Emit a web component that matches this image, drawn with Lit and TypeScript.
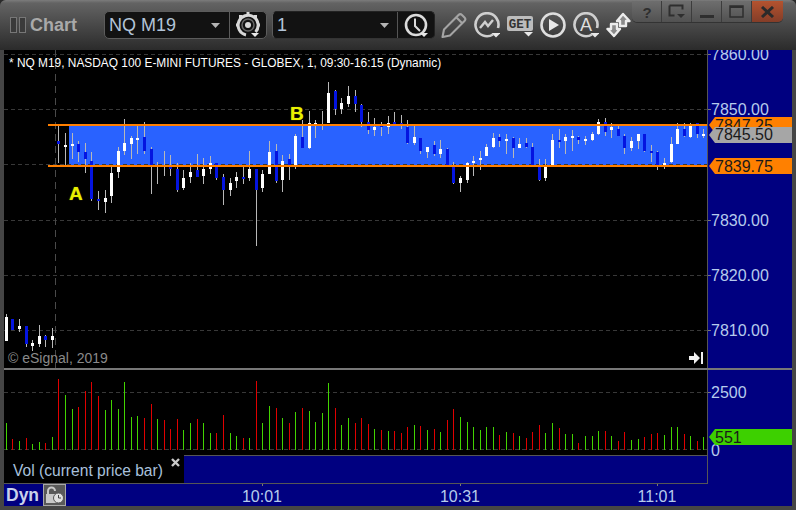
import { LitElement, html, svg, css } from "lit";
import { customElement } from "lit/decorators.js";

type Bar = [number, number, number, number, number, string, number, string];

const BARS: Bar[] = [
  [6,314,341,317,341,"w",423,"g"],[12,319,330,319,330,"b",439,"r"],[19,319,332,326,329,"w",441,"g"],[26,326,347,326,344,"b",438,"r"],
  [32,340,351,343,346,"w",444,"g"],[39,325,347,336,344,"w",442,"g"],[45,335,347,336,340,"b",443,"r"],[52,328,348,336,340,"w",437,"g"],
  [58,125,163,141,144,"b",379,"r"],[65,133,166,145,147,"w",395,"g"],[72,133,159,144,146,"w",409,"g"],[78,141,162,144,152,"b",407,"r"],
  [85,143,173,152,159,"b",391,"r"],[91,152,201,161,199,"b",382,"r"],[98,191,210,199,201,"b",396,"r"],[105,190,213,198,202,"w",410,"g"],
  [111,166,203,173,196,"w",400,"g"],[118,147,178,151,172,"w",409,"g"],[124,119,155,143,151,"w",382,"g"],[131,136,159,138,144,"w",417,"g"],
  [137,125,154,138,140,"w",416,"g"],[144,122,154,137,151,"b",418,"r"],[151,147,194,149,167,"b",404,"r"],[157,162,184,165,167,"w",419,"g"],
  [164,151,176,165,167,"b",420,"r"],[170,155,176,166,169,"b",429,"r"],[177,163,192,169,190,"b",419,"r"],[183,170,190,178,188,"w",430,"g"],
  [190,163,183,172,177,"w",423,"g"],[197,154,177,170,177,"b",419,"r"],[203,158,184,169,176,"w",423,"g"],[210,156,174,163,169,"w",433,"g"],
  [216,163,180,163,178,"b",433,"r"],[223,174,205,177,190,"b",415,"r"],[230,178,196,183,190,"w",433,"g"],[236,172,188,177,181,"w",436,"g"],
  [243,167,184,177,179,"b",438,"r"],[249,151,181,169,178,"w",438,"g"],[256,169,246,169,190,"b",381,"r"],[262,170,192,174,188,"w",423,"g"],
  [269,141,174,152,174,"w",406,"g"],[276,144,183,151,181,"b",408,"r"],[282,155,192,161,180,"w",418,"g"],[289,154,180,159,166,"b",423,"r"],
  [295,134,169,136,167,"w",412,"g"],[302,120,148,137,148,"b",408,"r"],[309,111,149,123,148,"w",411,"g"],[315,120,138,123,125,"w",422,"g"],
  [322,111,130,124,126,"w",413,"g"],[328,82,123,93,123,"w",383,"g"],[335,90,115,91,109,"b",408,"r"],[341,98,114,103,109,"w",425,"g"],
  [348,86,107,96,104,"w",418,"g"],[355,90,112,96,104,"b",423,"r"],[361,104,127,105,122,"b",418,"r"],[368,112,134,122,130,"b",424,"r"],
  [374,118,136,127,130,"w",429,"g"],[381,122,136,125,127,"b",430,"r"],[388,116,134,123,127,"w",431,"g"],[394,112,125,122,124,"b",431,"r"],
  [401,115,129,123,126,"b",433,"r"],[407,120,144,127,143,"b",427,"r"],[414,126,145,137,143,"w",425,"g"],[420,138,154,138,151,"b",426,"r"],
  [427,147,158,147,152,"w",430,"g"],[434,141,156,145,154,"b",429,"r"],[440,140,158,149,154,"w",432,"g"],[447,148,166,149,166,"b",420,"r"],
  [453,162,184,166,183,"b",409,"r"],[460,176,192,178,183,"w",417,"g"],[467,162,183,163,180,"w",422,"g"],[473,156,176,161,163,"w",427,"g"],
  [480,151,170,158,160,"w",430,"g"],[486,144,156,147,156,"w",427,"g"],[493,133,148,138,147,"w",427,"g"],[499,134,147,137,141,"b",435,"r"],
  [506,134,154,139,141,"w",432,"g"],[513,137,158,138,148,"b",433,"r"],[519,138,148,144,148,"w",436,"g"],[526,138,148,143,147,"b",438,"r"],
  [532,143,166,147,166,"b",432,"r"],[539,159,181,165,180,"b",425,"r"],[545,159,181,166,178,"w",433,"g"],[552,134,166,140,166,"w",423,"g"],
  [559,129,148,140,142,"b",428,"r"],[565,134,154,137,141,"w",434,"g"],[572,130,151,136,138,"w",434,"g"],[578,136,144,137,140,"b",443,"r"],
  [585,136,145,139,141,"w",436,"g"],[592,132,141,134,140,"w",436,"g"],[598,119,135,122,134,"w",431,"g"],[605,118,136,122,132,"b",431,"r"],
  [611,123,138,127,130,"w",436,"g"],[618,126,136,129,136,"b",441,"r"],[624,134,154,136,148,"b",432,"r"],[631,137,151,141,148,"w",440,"g"],
  [638,134,149,134,141,"w",439,"g"],[644,134,152,134,151,"b",437,"r"],[651,145,162,151,153,"b",434,"r"],[657,151,170,152,166,"b",433,"r"],
  [664,158,169,163,165,"w",435,"g"],[671,137,163,144,162,"w",427,"g"],[677,123,144,129,144,"w",427,"g"],[684,123,137,129,136,"b",434,"r"],
  [690,123,138,125,137,"w",436,"g"],[697,123,138,123,134,"b",441,"r"],[703,129,138,134,136,"w",437,"g"],
];

const PRICE_LABELS: [string, number][] = [
  ["7860.00", 54], ["7850.00", 109], ["7830.00", 220], ["7820.00", 275], ["7810.00", 330],
];
const PRICE_GRID = [54, 109, 164, 220, 275, 330];
const TIME_LABELS: [string, number][] = [["10:01", 262], ["10:31", 460], ["11:01", 657]];

const caret = (x: number, y: number) => svg`<path d="M${x - 4.5} ${y}h9l-4.500 4.500z" fill="#e8e8e8"/>`;

@customElement("app-root")
export class AppRoot extends LitElement {
  static styles = css`
    :host { display: block; width: 796px; height: 510px; font-family: "Liberation Sans", Arial, sans-serif; background: #2a2a2a; overflow: hidden; }
    .window { width: 796px; height: 510px; border-radius: 6px 6px 0 0; overflow: hidden; position: relative; background: #454545; display: flex; flex-direction: column; }
    .toolbar { height: 50px; flex: none; display: flex; align-items: flex-start; box-sizing: border-box; padding: 11px 0 0 10px;
      background: linear-gradient(#7c7c7c 0, #636363 3px, #4c4c4c 22px, #2b2b2b 50px); }
    .title { display: flex; align-items: center; height: 28px; width: 94px; flex: none; gap: 4px; color: #a9a9a9; font-size: 18px; font-weight: 700; }
    .title svg { display: block; flex: none; }
    .combo { width: 163px; height: 28px; box-sizing: border-box; flex: none; display: flex; align-items: stretch; background: #121212; border: 1px solid #5c5c5c; border-radius: 5px; margin-right: 5px; }
    .combo.second { margin-right: 0; border-right-color: #222; border-top-color:#222; border-bottom-color: #333; }
    .combo .value { flex: 1; display: flex; align-items: center; padding-left: 4px; color: #b3c4d8; font-size: 18px; }
    .combo .drop { width: 13px; margin-right: 7px; align-self: center; }
    .combo.second .drop { margin-right: 6px; }
    .combo .btn { width: 36px; border-left: 1px solid #5c5c5c; display: flex; align-items: center; justify-content: center; }
    .combo.second .btn { border-left-color: #555; }
    .tools { display: flex; margin-left: 6px; gap: 7px; margin-top: 1px; }
    .tools svg { display: block; flex: none; }
    .winctl { position: absolute; top: 1px; left: 632px; width: 151px; height: 21px; display: flex; border-radius: 0 0 5px 5px; overflow: hidden; box-shadow: 0 1px 0 #333; }
    .winctl div { width: 30px; height: 21px; flex: none; display: flex; align-items: center; justify-content: center; box-sizing: border-box; border-right: 1px solid #3c3c3c; background: linear-gradient(#6e6e6e, #515151); }
    .winctl div:last-child { width: 31px; border-right: none; background: linear-gradient(#b4532f, #843d28); }
    .chart { flex: none; margin: 0 4px; width: 788px; height: 456px; display: grid; grid-template-columns: 703px 1px 84px; grid-template-rows: 318px 2px 85px 28px 1px 22px; background: #000080; }
    .price, .volume { position: relative; background: #000; overflow: hidden; }
    .price { grid-column: 1; grid-row: 1; }
    .volume { grid-column: 1; grid-row: 3; }
    svg.plot { position: absolute; left: 0; top: 0; display: block; }
    .vline { background: #565656; }
    .vline.a { grid-column: 2; grid-row: 1; }
    .vline.b { grid-column: 2; grid-row: 3 / 6; }
    .sep { grid-column: 1 / 4; grid-row: 2; background: #777; }
    .axis { position: relative; background: #000080; overflow: hidden; }
    .axis.p { grid-column: 3; grid-row: 1; }
    .axis.v { grid-column: 3; grid-row: 3 / 6; }
    .tick { position: absolute; left: 0; width: 3px; height: 1px; background: #777; }
    .axlabel { position: absolute; left: 3px; font-size: 16px; line-height: 16px; color: #b6cbec; }
    .tag { position: absolute; left: 1px; right: 0; height: 16px; box-sizing: border-box; display: flex; align-items: center; padding: 2px 0 0 6px; font-size: 16px; color: #1a1a1a; clip-path: polygon(0 50%, 6px 0, 100% 0, 100% 100%, 6px 100%); }
    .tag.o { background: #ff8000; }
    .tag.g { background: #a6a6a6; padding-top: 0; }
    .tag.l { background: #3dd000; }
    .note { position: absolute; white-space: nowrap; }
    .heading { left: 5px; top: 6px; color: #fff; font-size: 11.900px; line-height: 14px; }
    .copy { left: 4px; top: 300px; color: #8a8a8a; font-size: 14px; line-height: 16px; }
    .mark { color: #e8f000; font-size: 19px; font-weight: 700; line-height: 18px; text-shadow: 0 0 1px #9a9a00; }
    .end { position: absolute; left: 685px; top: 301px; display: block; }
    .legend { grid-column: 1; grid-row: 4; display: flex; background: #000; }
    .legend .name { width: 180px; flex: none; box-sizing: border-box; position: relative; padding: 7px 0 0 9px; color: #a9c0dc; font-size: 15.600px; line-height: 18px; white-space: nowrap; }
    .legend .x { position: absolute; left: 167px; top: 3px; display: block; }
    .legend .fill { flex: 1; background: #000080; border-top: 1px solid #565656; }
    .hline { grid-column: 1; grid-row: 5; background: #565656; }
    .timebar { grid-column: 1 / 4; grid-row: 6; position: relative; background: #000080; display: flex; align-items: flex-start; }
    .dyn { padding: 2px 0 0 2px; width: 39px; box-sizing: border-box; flex: none; color: #c9d2ea; font-size: 17.500px; font-weight: 700; line-height: 18px; }
    .lock { width: 23px; height: 22px; box-sizing: border-box; flex: none; background: #595959; border: 1px solid #a8a8a8; display: flex; align-items: center; justify-content: center; }
    .time { position: absolute; top: 4px; width: 60px; text-align: center; color: #b6cbec; font-size: 16px; line-height: 18px; }
    .ttick { position: absolute; top: 0; width: 1px; height: 2px; background: #777; }
  `;

  private plot() {
    return svg`
      <rect x="69" y="126" width="639" height="39" fill="#2962ff"/>
      ${PRICE_GRID.map((y) => svg`<line x1="4" x2="708" y1=${y + 0.5} y2=${y + 0.5} stroke="#383838" stroke-dasharray="4 3"/>`)}
      <line x1="55.5" x2="55.5" y1="50" y2="368" stroke="#4a4a4a" stroke-dasharray="7 5"/>
      ${BARS.map(([x, wt, wb, bt, bb, c]) => svg`
        <rect x=${x} y=${wt} width="1" height=${wb - wt} fill="#b8b8b8"/>
        <rect x=${x - 1} y=${bt} width="3" height=${bb - bt} fill=${c === "w" ? "#fff" : "#0414e0"}/>`)}
      <rect x="48" y="124" width="660" height="2" fill="#ff7f00"/>
      <rect x="48" y="165" width="660" height="2" fill="#ff7f00"/>`;
  }

  private volume() {
    return svg`
      <line x1="4" x2="708" y1="392.5" y2="392.5" stroke="#383838" stroke-dasharray="4 3"/>
      <line x1="4" x2="708" y1="449.5" y2="449.5" stroke="#383838" stroke-dasharray="4 3"/>
      ${BARS.map(([x, , , , , , vt, vc]) => svg`<rect x=${x} y=${vt} width="1" height=${450 - vt} fill=${vc === "g" ? "#42d400" : "#e00000"}/>`)}`;
  }

  render() {
    return html`<div class="window">
      <header class="toolbar">
        <div class="title">
          <svg width="16" height="16" viewBox="0 0 16 16"><g fill="#3a3a3a" stroke="#777"><rect x=".5" y=".5" width="6" height="15"/><rect x="9.500" y=".5" width="6" height="15"/></g></svg>
          <span>Chart</span>
        </div>
        <div class="combo">
          <div class="value">NQ M19</div>
          <svg class="drop" width="13" height="7" viewBox="0 0 13 7"><path d="M2 1h9l-4.500 5z" fill="#b5b5b5"/></svg>
          <div class="btn">
            <svg width="28" height="26" viewBox="0 0 28 26">
              <g fill="none" stroke="#d8d8d8"><path d="M21.500 20A10 10 0 1 0 12 23" stroke-width="3"/><circle cx="14" cy="13" r="3" fill="#d8d8d8" stroke="none"/><circle cx="14" cy="13" r="6" stroke-width="1.500" stroke="#666"/></g>
              <g fill="#d8d8d8"><rect x="12.500" y="0" width="3" height="3"/><rect x="2" y="11.500" width="3" height="3"/><rect x="23" y="11.500" width="3" height="3"/><rect x="5" y="3" width="3" height="3"/><rect x="20" y="3" width="3" height="3"/></g>
              <path d="M17 21h8l-4 4z" fill="#e8e8e8"/>
            </svg>
          </div>
        </div>
        <div class="combo second">
          <div class="value">1</div>
          <svg class="drop" width="13" height="7" viewBox="0 0 13 7"><path d="M2 1h9l-4.500 5z" fill="#b5b5b5"/></svg>
          <div class="btn">
            <svg width="28" height="26" viewBox="0 0 28 26">
              <circle cx="14" cy="13" r="10" fill="none" stroke="#dcdcdc" stroke-width="2.600"/>
              <path d="M13 6.500v7.500l5 5" fill="none" stroke="#dcdcdc" stroke-width="2"/>
              <path d="M18 21h8l-4 4z" fill="#e8e8e8"/>
            </svg>
          </div>
        </div>
        <div class="tools">
          <svg width="26" height="26" viewBox="0 0 26 26"><path d="M1.500 25l1.500-7.500L17.500 3a2.500 2.500 0 0 1 3.500 0l2.500 2.500a2.500 2.500 0 0 1 0 3.500L9 23.500z M15.500 5.500l6 6" fill="none" stroke="#a4a4a4" stroke-width="2.100" stroke-linejoin="round"/></svg>
          <svg width="26" height="26" viewBox="0 0 26 26"><path d="M19 22.500A11.500 11.500 0 1 1 24 16" fill="none" stroke="#cfcfcf" stroke-width="2.600"/><path d="M6 16l5-6 3 4 5-6" fill="none" stroke="#cfcfcf" stroke-width="2.400"/>${caret(22, 21)}</svg>
          <svg width="26" height="26" viewBox="0 0 26 26"><rect x="0" y="4" width="26" height="15" rx="2" fill="#bcbcbc"/><text x="13" y="16" text-anchor="middle" font-family="Liberation Mono" font-weight="700" font-size="12.500" fill="#333">GET</text>${caret(21.500, 20)}</svg>
          <svg width="26" height="26" viewBox="0 0 26 26"><circle cx="13" cy="13" r="11.500" fill="none" stroke="#dedede" stroke-width="2.600"/><path d="M9 7l10 6-10 6z" fill="#e8e8e8"/></svg>
          <svg width="26" height="26" viewBox="0 0 26 26"><path d="M19 22.500A11.500 11.500 0 1 1 24 16" fill="none" stroke="#cfcfcf" stroke-width="2.600"/><text x="13" y="19" text-anchor="middle" font-family="Liberation Sans" font-size="18" fill="#dedede">A</text>${caret(22, 21)}</svg>
          <svg width="26" height="26" viewBox="0 0 26 26"><g fill="#8a8a8a" stroke="#ececec" stroke-width="2.400" stroke-linejoin="round"><path d="M17 2l6.500 7h-3.500v5h-6v-5h-3z"/><path d="M8 24l-6.500-7h3.500v-5h6v5h3z"/></g></svg>
        </div>
        <div class="winctl">
          <div><svg width="14" height="16" viewBox="0 0 14 16"><text x="7" y="14" text-anchor="middle" font-family="Liberation Sans" font-weight="700" font-size="15" fill="#2e2e2e">?</text></svg></div>
          <div><svg width="18" height="15" viewBox="0 0 18 15"><path d="M1.500 1.500h13v4M1.500 1.500v10h5" fill="none" stroke="#2e2e2e" stroke-width="2"/><path d="M9 10h8l-4 4z" fill="#2e2e2e"/></svg></div>
          <div><svg width="14" height="14" viewBox="0 0 14 14"><rect y="10" width="14" height="3" fill="#2e2e2e"/></svg></div>
          <div><svg width="15" height="13" viewBox="0 0 15 13"><rect x="1" y="1" width="13" height="11" fill="none" stroke="#2e2e2e" stroke-width="1.500"/><rect x="1" y="1" width="13" height="2" fill="#2e2e2e"/></svg></div>
          <div><svg width="15" height="12" viewBox="0 0 15 12"><path d="M2 1l11 10M13 1L2 11" stroke="#2a2a2a" stroke-width="3"/></svg></div>
        </div>
      </header>
      <main class="chart">
        <section class="price">
          <svg class="plot" width="703" height="318" viewBox="4 50 703 318">${this.plot()}</svg>
          <div class="note heading">* NQ M19, NASDAQ 100 E-MINI FUTURES - GLOBEX, 1, 09:30-16:15 (Dynamic)</div>
          <div class="note mark" style="left:65px;top:135px">A</div>
          <div class="note mark" style="left:286px;top:55px">B</div>
          <div class="note copy">© eSignal, 2019</div>
          <svg class="end" width="15" height="14" viewBox="0 0 15 14"><path d="M0 5h5V1l6 6-6 6V9H0z" fill="#f0f0f0"/><rect x="12" y="1" width="2" height="12" fill="#f0f0f0"/></svg>
        </section>
        <div class="vline a"></div>
        <aside class="axis p">
          ${PRICE_LABELS.map(([t, y]) => html`<div class="tick" style="top:${y - 50}px"></div><div class="axlabel" style="top:${y - 57}px">${t}</div>`)}
          <div class="tag o" style="top:67px">7847.25</div>
          <div class="tag g" style="top:77px">7845.50</div>
          <div class="tag o" style="top:108px">7839.75</div>
        </aside>
        <div class="sep"></div>
        <section class="volume">
          <svg class="plot" width="703" height="85" viewBox="4 370 703 85">${this.volume()}</svg>
        </section>
        <div class="vline b"></div>
        <aside class="axis v">
          <div class="tick" style="top:22px"></div>
          <div class="axlabel" style="top:15px">2500</div>
          <div class="axlabel" style="top:73px">0</div>
          <div class="tag l" style="top:59px">551</div>
        </aside>
        <div class="legend">
          <div class="name">Vol (current price bar)
            <svg class="x" width="9" height="9" viewBox="0 0 9 9"><path d="M1 1l7 7M8 1L1 8" stroke="#c8c8c8" stroke-width="2.400"/></svg>
          </div>
          <div class="fill"></div>
        </div>
        <div class="hline"></div>
        <footer class="timebar">
          <div class="dyn">Dyn</div>
          <div class="lock">
            <svg width="20" height="18" viewBox="0 0 20 18"><path d="M3 8V5a3.500 3.500 0 0 1 7 0" fill="none" stroke="#c8c8c8" stroke-width="2"/><rect x="1" y="8" width="11" height="9" fill="#c8c8c8"/><circle cx="13.500" cy="12" r="5" fill="#e0e0e0" stroke="#555"/><path d="M13.500 9v3h2.500" fill="none" stroke="#444"/></svg>
          </div>
          ${TIME_LABELS.map(([t, x]) => html`<div class="ttick" style="left:${x - 4}px"></div><div class="time" style="left:${x - 34}px">${t}</div>`)}
        </footer>
      </main>
    </div>`;
  }
}
